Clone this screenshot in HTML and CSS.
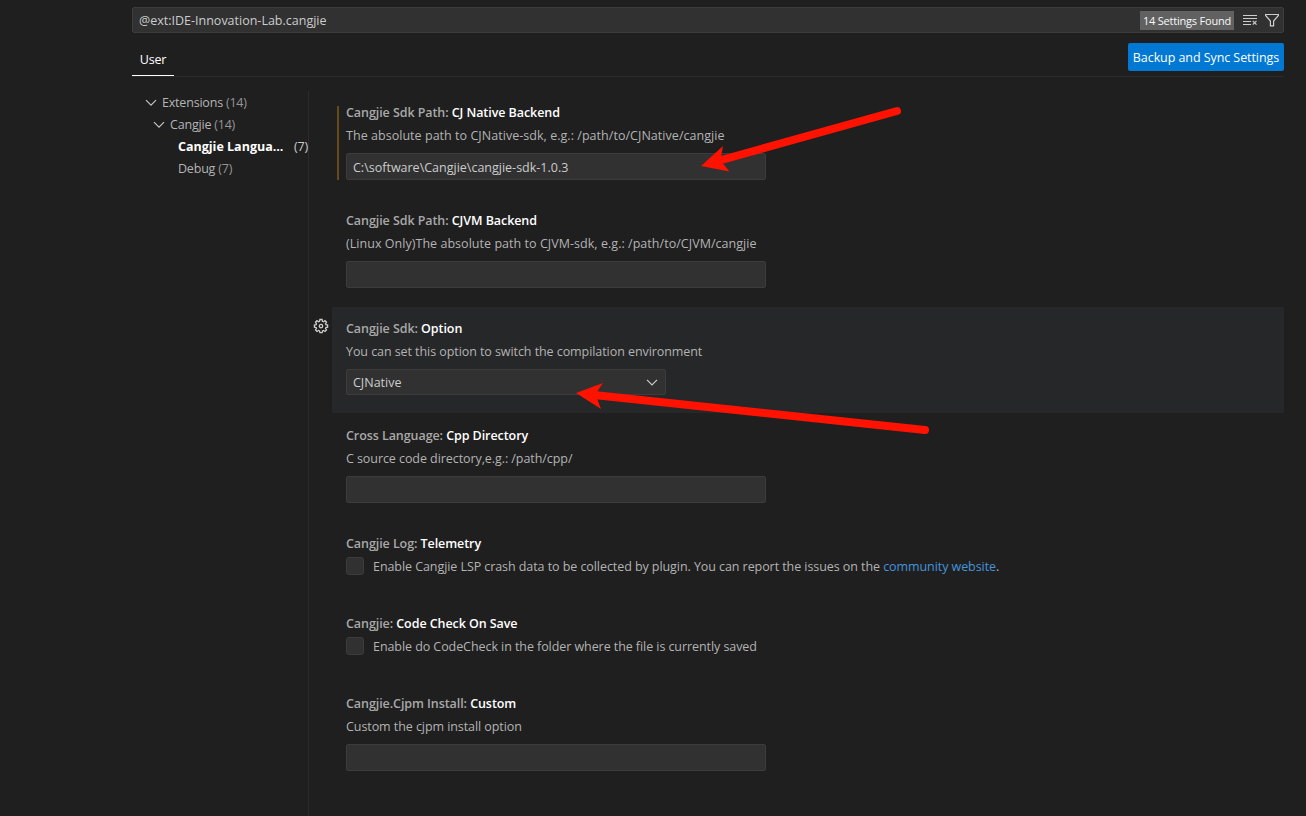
FILE: index.html
```
<!DOCTYPE html>
<html lang="en">
<head>
    <meta charset="UTF-8">
    <meta name="viewport" content="width=device-width, initial-scale=1.0">
    <title>Settings</title>
    <link rel="stylesheet" href="styles.css">
</head>
<body>
    <div class="settings-editor">
        <!-- Search bar -->
        <header class="search-bar">
            <span class="search-text">@ext:IDE-Innovation-Lab.cangjie</span>
            <span class="count-badge">14 Settings Found</span>
            <svg class="clear-icon" width="16" height="16" viewBox="0 0 16 16" fill="none" stroke="#cccccc">
                <path d="M1 3.5h14M1 6.5h14M1 9.5h8M1 12.5h8"/>
                <path d="M10.7 8.9l3.8 3.8M14.5 8.9l-3.8 3.8" stroke-width="1.2"/>
            </svg>
            <svg width="16" height="16" viewBox="0 0 16 16" fill="none" stroke="#cccccc" stroke-width="1.2">
                <path d="M1.6 2.5h12.8v1L9.6 9v4.9H6.4V9L1.6 3.5z"/>
            </svg>
        </header>

        <div class="tabs">
            <div class="tab">User</div>
            <button class="sync-button">Backup and Sync Settings</button>
        </div>

        <div class="settings-body">
            <!-- Table of contents -->
            <nav class="toc">
                <div class="toc-row level-1">
                    <svg width="16" height="16" viewBox="0 0 16 16" fill="none" stroke="#c5c5c5" stroke-width="1.2"><path d="M3 5.2l5 5 5-5"/></svg>
                    <span>Extensions</span> <span class="count">(14)</span>
                </div>
                <div class="toc-row level-2">
                    <svg width="16" height="16" viewBox="0 0 16 16" fill="none" stroke="#c5c5c5" stroke-width="1.2"><path d="M3 5.2l5 5 5-5"/></svg>
                    <span>Cangjie</span> <span class="count">(14)</span>
                </div>
                <div class="toc-row level-3 selected">
                    <span class="label">Cangjie Langua...</span> <span class="count">(7)</span>
                </div>
                <div class="toc-row level-3">
                    <span>Debug</span> <span class="count">(7)</span>
                </div>
            </nav>

            <main class="settings-list">
                <section class="setting modified">
                    <h3><span>Cangjie Sdk Path: </span>CJ Native Backend</h3>
                    <p class="path">The absolute path to CJNative-sdk, e.g.: /path/to/CJNative/cangjie</p>
                    <div class="input">C:\software\Cangjie\cangjie-sdk-1.0.3</div>
                </section>
                <section class="setting">
                    <h3><span>Cangjie Sdk Path: </span>CJVM Backend</h3>
                    <p class="path">(Linux Only)The absolute path to CJVM-sdk, e.g.: /path/to/CJVM/cangjie</p>
                    <div class="input"></div>
                </section>
                <section class="setting focused">
                    <svg class="gear" width="16" height="16" viewBox="0 0 16 16" fill="none" stroke="#cccccc" stroke-width="1.3">
                        <path d="M6.9 1.5h2.2l.4 1.8.9.4 1.6-1 1.5 1.5-1 1.6.4.9 1.7.3v2.2l-1.7.4-.4.9 1 1.5-1.5 1.5-1.6-1-.9.4-.4 1.7H6.9l-.4-1.7-.9-.4-1.6 1L2.5 12l1-1.5-.4-.9-1.7-.4V7l1.7-.3.4-.9-1-1.6L4 2.7l1.6 1 .9-.4z"/>
                        <circle cx="8" cy="8.1" r="1.7"/>
                    </svg>
                    <h3><span>Cangjie Sdk: </span>Option</h3>
                    <p>You can set this option to switch the compilation environment</p>
                    <div class="input select">
                        CJNative
                        <svg width="16" height="16" viewBox="0 0 16 16" fill="none" stroke="#cccccc" stroke-width="1.2"><path d="M3 4.8l5 5 5-5"/></svg>
                    </div>
                </section>
                <section class="setting">
                    <h3><span>Cross Language: </span>Cpp Directory</h3>
                    <p>C source code directory,e.g.: /path/cpp/</p>
                    <div class="input"></div>
                </section>
                <section class="setting check">
                    <h3><span>Cangjie Log: </span>Telemetry</h3>
                    <div class="check-row">
                        <div class="checkbox"></div>
                        <p>Enable Cangjie LSP crash data to be collected by plugin. You can report the issues on the <a>community website</a>.</p>
                    </div>
                </section>
                <section class="setting check">
                    <h3><span>Cangjie: </span>Code Check On Save</h3>
                    <div class="check-row">
                        <div class="checkbox"></div>
                        <p>Enable do CodeCheck in the folder where the file is currently saved</p>
                    </div>
                </section>
                <section class="setting">
                    <h3><span>Cangjie.Cjpm Install: </span>Custom</h3>
                    <p>Custom the cjpm install option</p>
                    <div class="input"></div>
                </section>
            </main>
        </div>
    </div>

    <!-- Arrows drawn over the page -->
    <svg class="arrows" width="1306" height="816" viewBox="0 0 1306 816">
        <path d="M897 111L718 161" />
        <path d="M925 430L594 395" />
        <polygon points="701,166 723,146 720.5,160.5 729.5,171.5"/>
        <polygon points="576,393 603,383 595.5,394 601,409"/>
    </svg>
</body>
</html>
```
FILE: styles.css
```
* {
    box-sizing: border-box;
}

body {
    margin: 0;
    height: 816px;
    overflow: hidden;
    background: #1f1f1f;
    color: #cccccc;
    font-family: 'Segoe UI', 'Open Sans', 'Noto Sans', sans-serif;
    font-size: 12.5px;
    line-height: 18px;
    letter-spacing: -0.07px;
}

.settings-editor {
    display: flex;
    flex-direction: column;
    height: 816px;
    padding: 7px 22px 0 132px;
}

/* Search */
.search-bar {
    display: flex;
    align-items: center;
    height: 26px;
    padding: 0 3px 0 6px;
    background: #313131;
    border: 1px solid #3c3c3c;
    border-radius: 2px;
}

.search-text {
    flex: 1;
    padding-top: 2px;
    letter-spacing: 0;
}

.count-badge {
    width: 94px;
    height: 19px;
    line-height: 20px;
    margin-right: 8px;
    background: #616161;
    color: #f8f8f8;
    font-size: 11px;
    letter-spacing: -0.2px;
    text-align: center;
    white-space: nowrap;
}

.clear-icon {
    margin-right: 6px;
}

/* Tabs */
.tabs {
    display: flex;
    justify-content: space-between;
    height: 44px;
    padding-top: 5px;
    border-bottom: 1px solid #2b2b2b;
}

.tab {
    height: 38px;
    width: 42px;
    padding-top: 13px;
    text-align: center;
    letter-spacing: -0.2px;
    color: #ffffff;
    border-bottom: 1px solid #ffffff;
}

.sync-button {
    width: 156px;
    height: 28px;
    margin-top: 5px;
    padding: 2px 0 0;
    border: none;
    border-radius: 2px;
    background: #0078d4;
    color: #ffffff;
    font: inherit;
    letter-spacing: inherit;
    white-space: nowrap;
}

.settings-body {
    display: flex;
    flex: 1;
    padding-top: 14px;
}

/* Table of contents */
.toc {
    width: 177px;
    border-right: 1px solid #2b2b2b;
    color: #b4b4b4;
    letter-spacing: -0.2px;
}

.toc-row {
    display: flex;
    align-items: center;
    height: 22px;
    padding-top: 2px;
    white-space: nowrap;
}

.toc-row svg {
    margin-right: 3px;
}

.toc .count {
    margin-left: 3px;
    color: #969696;
}

.level-1 {
    padding-left: 11px;
}

.level-2 {
    padding-left: 19px;
}

.level-3 {
    padding-left: 46px;
}

.selected {
    color: #ffffff;
    justify-content: space-between;
}

.selected .label {
    font-weight: 700;
    letter-spacing: 0;
}

.toc .selected .count {
    color: #cccccc;
}

/* Settings list */
.settings-list {
    flex: 1;
    padding-left: 23px;
}

.setting {
    position: relative;
    height: 108px;
    padding: 13px 14px 0;
}

.setting h3 {
    margin: 0 0 5px;
    font-size: inherit;
    font-weight: 600;
    color: #ffffff;
}

.setting h3 span {
    color: #a9a9a9;
}

.setting p {
    margin: 0;
    color: #b3b3b3;
}

.setting .path {
    letter-spacing: 0.04px;
}

.setting a {
    color: #4395dc;
}

.input {
    display: flex;
    align-items: center;
    width: 420px;
    height: 27px;
    margin-top: 8px;
    padding: 2px 6px 0;
    background: #313131;
    border: 1px solid #3c3c3c;
    border-radius: 2px;
    letter-spacing: 0;
}

.select {
    justify-content: space-between;
    width: 320px;
    height: 26px;
    padding-right: 5px;
}

.modified::before {
    content: '';
    position: absolute;
    left: 5px;
    top: 15px;
    width: 2px;
    height: 74px;
    background: #664b18;
}

.focused {
    height: 106px;
    margin-bottom: 1px;
    background: #262728;
}

.gear {
    position: absolute;
    left: -19px;
    top: 11px;
}

.check {
    height: 80px;
}

.check-row {
    display: flex;
    gap: 9px;
}

.checkbox {
    width: 18px;
    height: 18px;
    margin-top: -1px;
    background: #313131;
    border: 1px solid #3c3c3c;
    border-radius: 3px;
}

.arrows {
    position: absolute;
    left: 0;
    top: 0;
}

.arrows path {
    fill: none;
    stroke: #ff1200;
    stroke-width: 8;
    stroke-linecap: round;
}

.arrows polygon {
    fill: #ff1200;
}
```
